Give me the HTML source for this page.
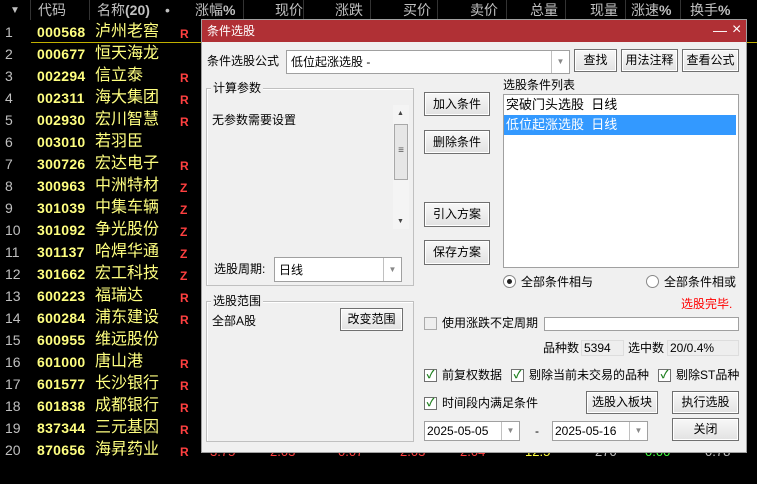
<!DOCTYPE html><html><head><meta charset="utf-8"><style>
*{margin:0;padding:0;box-sizing:border-box}
body{width:757px;height:484px;background:#000;position:relative;overflow:hidden;font-family:"Liberation Sans","Noto Sans CJK SC",sans-serif;font-size:12px;line-height:16px}
.a{position:absolute;white-space:nowrap}
.h{color:#c0c0c0;font-size:14px;top:2px}
.n{color:#c0c0c0;font-size:14px;left:5px}
.c{color:#ffff80;font-weight:bold;font-size:14px;left:37px;letter-spacing:.3px}
.m{color:#ffff80;font-size:16px;left:95px}
.r{color:#ff4040;font-weight:bold;font-size:12px;left:180px}
.sep{position:absolute;top:0;width:1px;height:20px;background:#333}
.dlg{position:absolute;left:201px;top:19px;width:546px;height:434px;background:#f0f0f0;border:1px solid #a0a0a0}
.t{color:#000;font-size:12px}
.btn{position:absolute;background:linear-gradient(#f8f8f8,#e2e2e2);border:1px solid #707070;box-shadow:inset 0 0 0 1px #fff;text-align:center;font-size:12px;color:#000}
.box{position:absolute;background:#fff;border:1px solid #a0a0a0}
.grp{position:absolute;border:1px solid #c0c0c0;box-shadow:1px 1px 0 #fff inset}
.chk{position:absolute;width:13px;height:13px;border:1px solid #707070;background:#fff;color:#208020;font-size:11px;line-height:11px;text-align:center;font-weight:bold}
.dd{position:absolute;right:0;top:0;bottom:0;width:18px;border-left:1px solid #c0c0c0;color:#888;font-size:8px;text-align:center}
.bv{position:absolute;top:0px;font-size:13px;white-space:nowrap}
</style></head><body>
<div class="a" style="left:0;top:0;width:757px;height:20px;background:#000"></div>
<div class="a" style="left:10px;top:3px;color:#c0c0c0;font-size:10px">▼</div>
<div class="sep" style="left:30px"></div><div class="sep" style="left:89px"></div><div class="sep" style="left:243px"></div><div class="sep" style="left:303px"></div><div class="sep" style="left:370px"></div><div class="sep" style="left:437px"></div><div class="sep" style="left:506px"></div><div class="sep" style="left:565px"></div><div class="sep" style="left:625px"></div><div class="sep" style="left:680px"></div>
<div class="a h" style="left:38px">代码</div><div class="a h" style="left:97px">名称<b>(20)</b></div><div class="a h" style="left:165px">•</div><div class="a h" style="left:195px">涨幅<b>%</b></div><div class="a h" style="left:275px">现价</div><div class="a h" style="left:335px">涨跌</div><div class="a h" style="left:403px">买价</div><div class="a h" style="left:470px">卖价</div><div class="a h" style="left:530px">总量</div><div class="a h" style="left:590px">现量</div><div class="a h" style="left:631px">涨速<b>%</b></div><div class="a h" style="left:690px">换手<b>%</b></div>
<div class="a" style="left:31px;top:42px;width:170px;height:1px;background:#c0b000"></div>
<div class="a" style="left:747px;top:42px;width:10px;height:1px;background:#c0b000"></div>
<div id="rows"></div>
<div class="a" style="left:0;top:444px;width:757px;height:13px;overflow:hidden">
<div class="bv" style="left:210px;color:#ff4040">3.75</div>
<div class="bv" style="left:270px;color:#ff4040">2.03</div>
<div class="bv" style="left:338px;color:#ff4040">0.07</div>
<div class="bv" style="left:400px;color:#ff4040">2.03</div>
<div class="bv" style="left:460px;color:#ff4040">2.04</div>
<div class="bv" style="left:525px;color:#ffff40">12.5</div>
<div class="bv" style="left:595px;color:#c0c0c0">270</div>
<div class="bv" style="left:645px;color:#40ff40">0.00</div>
<div class="bv" style="left:705px;color:#c0c0c0">0.78</div>
</div>

<div class="dlg">
<div class="a" style="left:0;top:0;width:544px;height:22px;background:#b03035"></div>
<div class="a" style="left:5px;top:3px;color:#fff;font-size:12px">条件选股</div>
<div class="a" style="left:511px;top:2px;color:#fff;font-size:14px">—</div>
<div class="a" style="left:530px;top:2px;color:#fff;font-size:16px">×</div>
</div>
<div class="a t" style="left:207px;top:53px">条件选股公式</div>
<div class="box" style="left:286px;top:50px;width:284px;height:24px"><div class="a t" style="left:4px;top:3px">低位起涨选股 -</div><div class="dd" style="line-height:22px">▼</div></div>
<div class="btn" style="left:574px;top:49px;width:43px;height:23px;line-height:21px">查找</div>
<div class="btn" style="left:621px;top:49px;width:57px;height:23px;line-height:21px">用法注释</div>
<div class="btn" style="left:682px;top:49px;width:57px;height:23px;line-height:21px">查看公式</div>

<div class="grp" style="left:206px;top:88px;width:208px;height:198px"></div>
<div class="a t" style="left:211px;top:80px;background:#f0f0f0;padding:0 2px">计算参数</div>
<div class="a t" style="left:212px;top:112px">无参数需要设置</div>
<div class="a" style="left:393px;top:105px;width:16px;height:124px;background:#f4f4f4"></div>
<div class="a" style="left:397px;top:106px;color:#444;font-size:7px">▲</div>
<div class="a" style="left:394px;top:124px;width:14px;height:56px;background:#e6e6e6;border:1px solid #a8a8a8;text-align:center;color:#555;font-size:10px;line-height:52px">≡</div>
<div class="a" style="left:397px;top:214px;color:#444;font-size:7px">▼</div>
<div class="a t" style="left:214px;top:261px">选股周期:</div>
<div class="box" style="left:274px;top:257px;width:128px;height:25px"><div class="a t" style="left:4px;top:4px">日线</div><div class="dd" style="line-height:23px">▼</div></div>

<div class="grp" style="left:206px;top:301px;width:208px;height:141px"></div>
<div class="a t" style="left:211px;top:293px;background:#f0f0f0;padding:0 2px">选股范围</div>
<div class="a t" style="left:212px;top:313px">全部A股</div>
<div class="btn" style="left:340px;top:308px;width:63px;height:23px;line-height:21px">改变范围</div>

<div class="btn" style="left:424px;top:92px;width:66px;height:24px;line-height:22px">加入条件</div>
<div class="btn" style="left:424px;top:130px;width:66px;height:24px;line-height:22px">删除条件</div>
<div class="btn" style="left:424px;top:202px;width:66px;height:25px;line-height:23px">引入方案</div>
<div class="btn" style="left:424px;top:240px;width:66px;height:25px;line-height:23px">保存方案</div>

<div class="a t" style="left:503px;top:77px">选股条件列表</div>
<div class="box" style="left:503px;top:94px;width:236px;height:174px"></div>
<div class="a t" style="left:506px;top:97px;font-size:13px">突破门头选股&nbsp; 日线</div>
<div class="a" style="left:504px;top:115px;width:232px;height:20px;background:#3399ff"></div>
<div class="a" style="left:506px;top:117px;color:#fff;font-size:13px">低位起涨选股&nbsp; 日线</div>

<div class="a" style="left:503px;top:275px;width:13px;height:13px;border-radius:50%;border:1px solid #888;background:#fff"><div class="a" style="left:3px;top:3px;width:5px;height:5px;border-radius:50%;background:#222"></div></div>
<div class="a t" style="left:521px;top:274px">全部条件相与</div>
<div class="a" style="left:646px;top:275px;width:13px;height:13px;border-radius:50%;border:1px solid #888;background:#fff"></div>
<div class="a t" style="left:664px;top:274px">全部条件相或</div>
<div class="a" style="left:681px;top:296px;color:#ff0000;font-size:12px">选股完毕.</div>

<div class="chk" style="left:424px;top:317px;background:#eee;border-color:#aaa"></div>
<div class="a t" style="left:442px;top:315px">使用涨跌不定周期</div>
<div class="box" style="left:544px;top:317px;width:195px;height:14px"></div>
<div class="a t" style="left:543px;top:340px">品种数</div>
<div class="a" style="left:581px;top:340px;width:43px;height:16px;background:#eee;border:1px solid #ddd;font-size:12px;padding-left:2px;line-height:14px">5394</div>
<div class="a t" style="left:628px;top:340px">选中数</div>
<div class="a" style="left:667px;top:340px;width:72px;height:16px;background:#eee;border:1px solid #ddd;font-size:12px;padding-left:2px;line-height:14px">20/0.4%</div>

<div class="chk" style="left:424px;top:369px">✓</div><div class="a t" style="left:442px;top:367px">前复权数据</div>
<div class="chk" style="left:511px;top:369px">✓</div><div class="a t" style="left:529px;top:367px">剔除当前未交易的品种</div>
<div class="chk" style="left:658px;top:369px">✓</div><div class="a t" style="left:676px;top:367px">剔除ST品种</div>
<div class="chk" style="left:424px;top:397px">✓</div><div class="a t" style="left:442px;top:395px">时间段内满足条件</div>
<div class="btn" style="left:586px;top:391px;width:72px;height:23px;line-height:21px">选股入板块</div>
<div class="btn" style="left:672px;top:391px;width:67px;height:23px;line-height:21px">执行选股</div>
<div class="btn" style="left:672px;top:418px;width:67px;height:23px;line-height:21px">关闭</div>
<div class="box" style="left:424px;top:421px;width:96px;height:20px"><div class="a" style="left:2px;top:1px;font-size:12px">2025-05-05</div><div class="dd" style="line-height:18px">▼</div></div>
<div class="a t" style="left:535px;top:423px">-</div>
<div class="box" style="left:552px;top:421px;width:96px;height:20px"><div class="a" style="left:2px;top:1px;font-size:12px">2025-05-16</div><div class="dd" style="line-height:18px">▼</div></div>

<script>
var d=[["000568","泸州老窖","R"],["000677","恒天海龙",""],["002294","信立泰","R"],["002311","海大集团","R"],["002930","宏川智慧","R"],["003010","若羽臣",""],["300726","宏达电子","R"],["300963","中洲特材","Z"],["301039","中集车辆","Z"],["301092","争光股份","Z"],["301137","哈焊华通","Z"],["301662","宏工科技","Z"],["600223","福瑞达","R"],["600284","浦东建设","R"],["600955","维远股份",""],["601000","唐山港","R"],["601577","长沙银行","R"],["601838","成都银行","R"],["837344","三元基因","R"],["870656","海昇药业","R"]];
var h="";d.forEach(function(r,i){var y=24+i*22;h+='<div class="a n" style="top:'+y+'px">'+(i+1)+'</div><div class="a c" style="top:'+y+'px">'+r[0]+'</div><div class="a m" style="top:'+y+'px">'+r[1]+'</div><div class="a r" style="top:'+(y+2)+'px">'+r[2]+'</div>';});
document.getElementById("rows").innerHTML=h;
</script>
</body></html>
